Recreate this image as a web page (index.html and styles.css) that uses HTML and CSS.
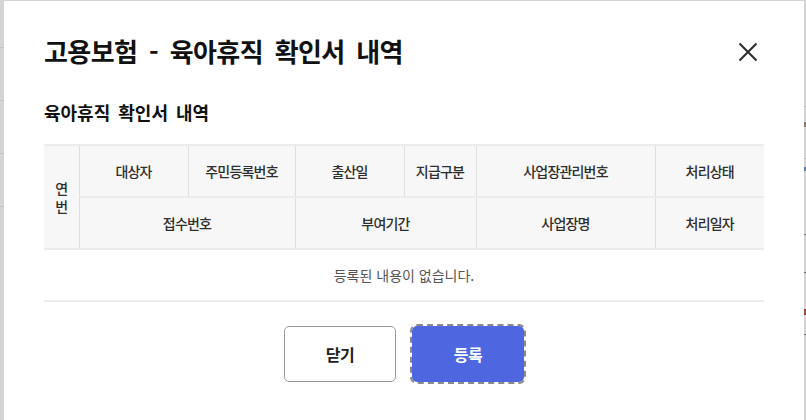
FILE: index.html
```html
<!DOCTYPE html>
<html lang="ko">
<head>
<meta charset="utf-8">
<title>고용보험 - 육아휴직 확인서 내역</title>
<link rel="stylesheet" href="styles.css">
</head>
<body>
<div class="backdrop">
  <div class="modal">
    <header class="modal-head">
      <h1 class="modal-title">고용보험 - 육아휴직 확인서 내역</h1>
      <button class="close" type="button" aria-label="닫기">
        <svg width="20" height="20" viewBox="0 0 20 20"><path d="M1.5 1.5 L18.5 18.5 M18.5 1.5 L1.5 18.5" stroke="#2b2b2b" stroke-width="2" fill="none"/></svg>
      </button>
    </header>
    <h2 class="section-title">육아휴직 확인서 내역</h2>
    <table class="grid">
      <colgroup>
        <col class="c1"><col class="c2"><col class="c3"><col class="c4"><col class="c5"><col class="c6"><col class="c7">
      </colgroup>
      <thead>
        <tr>
          <th rowspan="2" class="no">연번</th>
          <th>대상자</th>
          <th>주민등록번호</th>
          <th>출산일</th>
          <th>지급구분</th>
          <th>사업장관리번호</th>
          <th>처리상태</th>
        </tr>
        <tr>
          <th colspan="2">접수번호</th>
          <th colspan="2">부여기간</th>
          <th>사업장명</th>
          <th>처리일자</th>
        </tr>
      </thead>
      <tbody>
        <tr><td colspan="7" class="empty">등록된 내용이 없습니다.</td></tr>
      </tbody>
    </table>
    <div class="actions">
      <button class="btn btn-line" type="button">닫기</button>
      <button class="btn btn-primary" type="button">등록</button>
    </div>
  </div>
</div>
</body>
</html>
```
FILE: styles.css
```css
* { box-sizing: border-box; }
html, body { margin: 0; padding: 0; }
body {
  width: 806px;
  height: 420px;
  overflow: hidden;
  font-family: "Noto Sans CJK KR", "Noto Sans", sans-serif;
  color: #222;
  background-color: #d4d4d4;
  background-image:
    linear-gradient(#c2c2c2, #c2c2c2),
    linear-gradient(#c2c2c2, #c2c2c2),
    linear-gradient(#c2c2c2, #c2c2c2),
    linear-gradient(#c2c2c2, #c2c2c2),
    linear-gradient(#b8b8b8, #b8b8b8),
    linear-gradient(#b8b8b8, #b8b8b8),
    linear-gradient(#8a7a6a, #8a7a6a),
    linear-gradient(#5a7ab0, #5a7ab0),
    linear-gradient(#6a6a6a, #6a6a6a),
    linear-gradient(#6a6a6a, #6a6a6a),
    linear-gradient(#a04040, #a04040),
    linear-gradient(#6a6a6a, #6a6a6a);
  background-repeat: no-repeat;
  background-size: 4px 1px, 4px 1px, 4px 1px, 4px 1px, 2px 1px, 2px 1px, 2px 5px, 2px 4px, 2px 1px, 2px 1px, 2px 6px, 2px 1px;
  background-position:
    0 47px, 0 100px, 0 153px, 0 206px,
    804px 106px, 804px 158px,
    804px 122px, 804px 167px,
    804px 234px, 804px 272px,
    804px 309px, 804px 334px;
}
.backdrop {
  padding: 1px 2px 0 4px;
}
.modal {
  width: 800px;
  height: 440px;
  background: #fff;
  padding: 0 40px;
}
.modal-head {
  display: flex;
  align-items: center;
  justify-content: space-between;
  height: 102px;
}
.modal-title {
  margin: -2px 0 0;
  font-size: 26px;
  font-weight: 700;
  letter-spacing: -0.6px;
  word-spacing: 5px;
  color: #111;
  line-height: 1;
}
.close {
  width: 20px;
  height: 20px;
  padding: 0;
  border: 0;
  background: transparent;
  margin-right: 6px;
  margin-top: -1px;
  display: flex;
}
.section-title {
  margin: -4px 0 0;
  font-size: 18px;
  font-weight: 700;
  letter-spacing: 0;
  word-spacing: 3px;
  color: #111;
  line-height: 26px;
}
.grid {
  margin-top: 19px;
  width: 720px;
  table-layout: fixed;
  border-collapse: collapse;
  font-size: 14px;
  letter-spacing: -0.8px;
}
.c1 { width: 35px; }
.c2 { width: 109px; }
.c3 { width: 107px; }
.c4 { width: 109px; }
.c5 { width: 72px; }
.c6 { width: 179px; }
.c7 { width: 109px; }
.grid th {
  background: #f7f7f7;
  color: #2e2e2e;
  font-weight: 500;
  height: 52px;
  padding: 0;
  border: 1px solid #dedede;
  border-top: 2px solid #ebebeb;
  border-bottom: 2px solid #ebebeb;
  text-align: center;
  vertical-align: middle;
}
.grid tr th:first-child { border-left: 0; }
.grid tr th:last-child { border-right: 0; }
.grid th.no {
  padding: 0 10px;
  line-height: 18px;
  border-left: 0;
}
.grid thead tr:nth-child(2) th:first-child { border-left: 1px solid #dedede; }
.grid td.empty {
  height: 52px;
  padding: 0;
  text-align: center;
  color: #555;
  font-size: 14px;
  letter-spacing: 0;
  border-bottom: 2px solid #ebebeb;
}
.actions {
  display: flex;
  justify-content: center;
  gap: 16px;
  margin-top: 24px;
}
.btn {
  width: 112px;
  height: 56px;
  border-radius: 5px;
  font-family: inherit;
  font-size: 16px;
  font-weight: 700;
  letter-spacing: -0.5px;
  cursor: pointer;
}
.btn-line {
  background: #fff;
  border: 1px solid #999;
  color: #222;
}
.btn-primary {
  background: #4e67e0;
  border: 0;
  color: #fff;
  outline: 2px dashed #8a8a8a;
  outline-offset: 0;
}
```
